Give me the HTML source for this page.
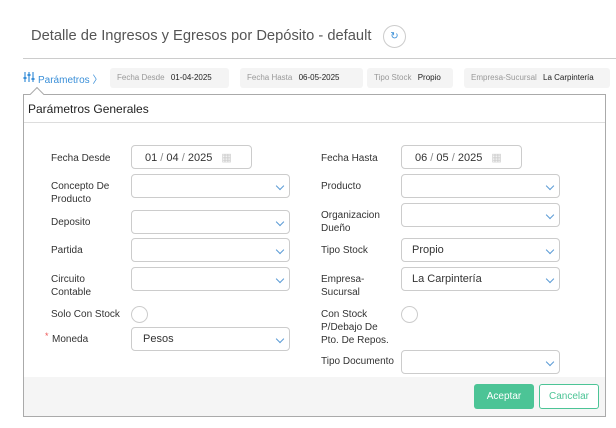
<!DOCTYPE html>
<html><head><style>
body{margin:0;width:616px;height:428px;overflow:hidden;background:#fff;font-family:"Liberation Sans",sans-serif;position:relative}
.a{position:absolute}
.lbl{position:absolute;font-size:10px;color:#333;line-height:13px}
.in{position:absolute;border:1px solid #ccc;border-radius:4px;background:#fff;box-sizing:border-box;height:24px;font-size:11px;color:#333}
.chev{position:absolute;right:6px;top:8px;width:5px;height:5px;border-right:1px solid #5b9bd5;border-bottom:1px solid #5b9bd5;transform:rotate(45deg)}
.chip{position:absolute;top:68px;height:20px;background:#f4f4f4;border-radius:3px;font-size:8px;line-height:20px;color:#999;padding-left:7px;box-sizing:border-box}
.chip b{color:#222;font-weight:normal;margin-left:4px}
.circ{position:absolute;width:15px;height:15px;border:1px solid #ccc;border-radius:50%}
</style></head><body>
<div class="a" style="left:31px;top:28px;font-size:14.7px;color:#555">Detalle de Ingresos y Egresos por Depósito - default</div>
<div class="a" style="left:383px;top:25px;width:21px;height:21px;border:1px solid #ccc;border-radius:50%;color:#3a8fd8;font-size:10px;text-align:center;line-height:21px">↻</div>
<div class="a" style="left:23px;top:58px;width:593px;height:1px;background:#ccc"></div>
<svg class="a" style="left:23px;top:72px" width="12" height="10"><g stroke="#3a8fd8" stroke-width="1.2"><line x1="2" y1="0" x2="2" y2="10"/><line x1="6" y1="0" x2="6" y2="10"/><line x1="10" y1="0" x2="10" y2="10"/></g><g fill="#3a8fd8"><rect x="0.5" y="5" width="3" height="2"/><rect x="4.5" y="2" width="3" height="2"/><rect x="8.5" y="6" width="3" height="2"/></g></svg>
<div class="a" style="left:38px;top:71px;font-size:10px;color:#3a8fd8">Parámetros 〉</div>
<div class="chip" style="left:110px;width:119px">Fecha Desde <b>01-04-2025</b></div>
<div class="chip" style="left:240px;width:123px">Fecha Hasta <b>06-05-2025</b></div>
<div class="chip" style="left:367px;width:86px">Tipo Stock <b>Propio</b></div>
<div class="chip" style="left:464px;width:146px">Empresa-Sucursal <b>La Carpintería</b></div>
<div class="a" style="left:23px;top:94px;width:583px;height:323px;border:1px solid #aaa;box-sizing:border-box;background:#fff"></div>
<div class="a" style="left:32px;top:89px;width:9px;height:9px;border-left:1px solid #aaa;border-top:1px solid #aaa;background:#fff;transform:rotate(45deg)"></div>
<div class="a" style="left:28px;top:102px;font-size:12px;color:#222">Parámetros Generales</div>
<div class="a" style="left:24px;top:122px;width:581px;height:1px;background:#ddd"></div>
<div class="a" style="left:24px;top:377px;width:581px;height:39px;background:#f5f5f5"></div>

<div class="lbl" style="left:51px;top:152px">Fecha Desde</div>
<div class="in" style="left:131px;top:145px;width:121px;padding:5px 0 0 13px">01 <span style="color:#888">/</span> 04 <span style="color:#888">/</span> 2025 <span style="color:#ccc;margin-left:6px">▦</span></div>
<div class="lbl" style="left:51px;top:180px">Concepto De<br>Producto</div>
<div class="in" style="left:131px;top:174px;width:159px"><i class="chev"></i></div>
<div class="lbl" style="left:51px;top:216px">Deposito</div>
<div class="in" style="left:131px;top:210px;width:159px"><i class="chev"></i></div>
<div class="lbl" style="left:51px;top:244px">Partida</div>
<div class="in" style="left:131px;top:238px;width:159px"><i class="chev"></i></div>
<div class="lbl" style="left:51px;top:273px">Circuito<br>Contable</div>
<div class="in" style="left:131px;top:267px;width:159px"><i class="chev"></i></div>
<div class="lbl" style="left:51px;top:308px">Solo Con Stock</div>
<div class="circ" style="left:131px;top:306px"></div>
<div class="a" style="left:45px;top:331px;font-size:9px;color:#e55">*</div>
<div class="lbl" style="left:52px;top:333px">Moneda</div>
<div class="in" style="left:131px;top:327px;width:159px;padding:5px 0 0 11px;font-size:11px">Pesos<i class="chev"></i></div>

<div class="lbl" style="left:321px;top:152px">Fecha Hasta</div>
<div class="in" style="left:401px;top:145px;width:121px;padding:5px 0 0 13px">06 <span style="color:#888">/</span> 05 <span style="color:#888">/</span> 2025 <span style="color:#ccc;margin-left:6px">▦</span></div>
<div class="lbl" style="left:321px;top:180px">Producto</div>
<div class="in" style="left:401px;top:174px;width:159px"><i class="chev"></i></div>
<div class="lbl" style="left:321px;top:209px">Organizacion<br>Dueño</div>
<div class="in" style="left:401px;top:203px;width:159px"><i class="chev"></i></div>
<div class="lbl" style="left:321px;top:244px">Tipo Stock</div>
<div class="in" style="left:401px;top:238px;width:159px;padding:5px 0 0 10px">Propio<i class="chev"></i></div>
<div class="lbl" style="left:321px;top:273px">Empresa-<br>Sucursal</div>
<div class="in" style="left:401px;top:267px;width:159px;padding:5px 0 0 10px">La Carpintería<i class="chev"></i></div>
<div class="lbl" style="left:321px;top:308px">Con Stock<br>P/Debajo De<br>Pto. De Repos.</div>
<div class="circ" style="left:401px;top:306px"></div>
<div class="lbl" style="left:321px;top:355px">Tipo Documento</div>
<div class="in" style="left:401px;top:350px;width:159px"><i class="chev"></i></div>

<div class="a" style="left:474px;top:384px;width:60px;height:25px;background:#4cc496;border-radius:3px;color:#fff;font-size:10px;text-align:center;line-height:25px">Aceptar</div>
<div class="a" style="left:539px;top:384px;width:60px;height:25px;border:1px solid #4cc496;box-sizing:border-box;background:#fff;border-radius:3px;color:#4cc496;font-size:10px;text-align:center;line-height:23px">Cancelar</div>
</body></html>
